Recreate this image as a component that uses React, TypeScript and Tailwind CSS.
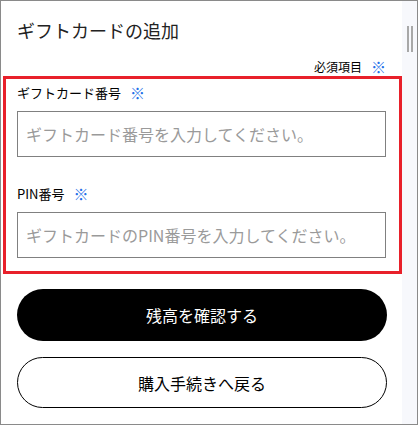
import React from "react";

const font = "font-['Noto_Sans_CJK_JP','Noto_Sans',sans-serif]";

const Required: React.FC = () => (
  <span className="ml-[9px] text-[15px] leading-5 text-[#1f6fe8]">※</span>
);

interface FieldProps {
  label: string;
  placeholder: string;
}

const Field: React.FC<FieldProps> = ({ label, placeholder }) => (
  <div className="flex flex-col">
    <label className="flex items-center h-5 text-[13px] leading-5 text-black">
      {label}
      <Required />
    </label>
    <input
      type="text"
      placeholder={placeholder}
      className={`mt-[8px] h-[46px] w-full border border-[#808080] bg-white px-2 text-[16px] outline-none placeholder:text-[#9a9a9a] ${font}`}
    />
  </div>
);

export default function App() {
  return (
    <div className={`flex w-[418px] h-[425px] border border-[#8a8a8a] bg-white overflow-hidden ${font}`}>
      <div className="flex flex-col w-[401px] shrink-0">
        <h1 className="pl-4 pt-[15px] text-[18px] leading-7 font-normal text-[#222]">
          ギフトカードの追加
        </h1>
        <div className="mt-[14px] flex justify-end items-center pr-4 text-[12px] leading-[18px] text-black">
          必須項目
          <span className="ml-[9px] text-[15px] text-[#1f6fe8]">※</span>
        </div>
        <div className="ml-[2px] border-[3px] border-[#e8202a] pl-[11px] pr-[13px] pt-[4px] pb-[13px] flex flex-col">
          <Field label="ギフトカード番号" placeholder="ギフトカード番号を入力してください。" />
          <div className="mt-[27px]">
            <Field label="PIN番号" placeholder="ギフトカードのPIN番号を入力してください。" />
          </div>
        </div>
        <div className="mt-[15px] pl-4 pr-[15px] flex flex-col gap-4">
          <button className="h-[52px] w-full rounded-full bg-black text-white text-[16px]">
            残高を確認する
          </button>
          <button className="h-[51px] w-full rounded-full border border-black bg-white text-black text-[16px]">
            購入手続きへ戻る
          </button>
        </div>
      </div>
      <div className="flex-1 bg-[#f7f8fc] flex justify-center gap-[2px] pt-[25px]">
        <div className="w-[2px] h-[26px] bg-[#a8a8a8]" />
        <div className="w-[2px] h-[26px] bg-[#a8a8a8]" />
      </div>
    </div>
  );
}
